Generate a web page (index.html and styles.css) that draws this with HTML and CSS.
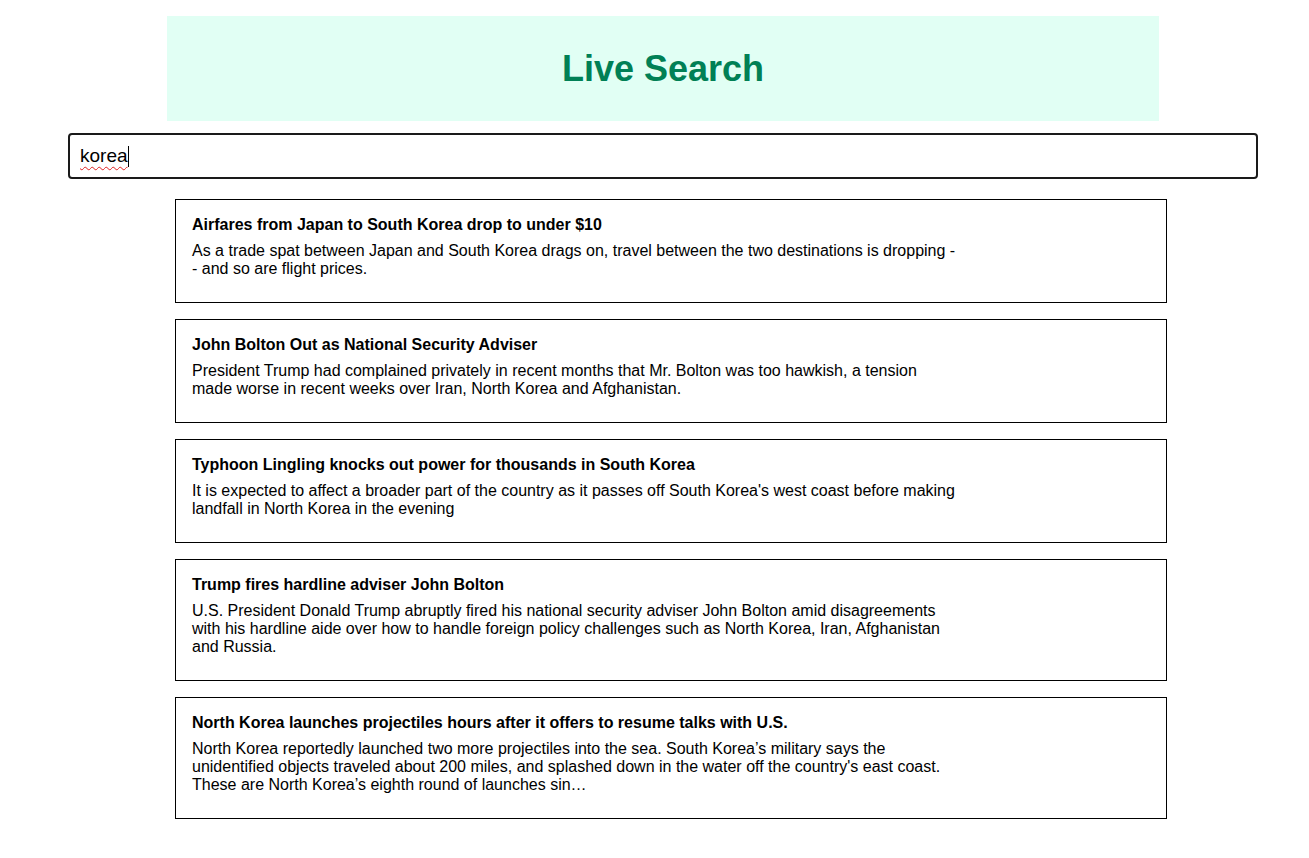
FILE: index.html
```html
<!DOCTYPE html>
<html>
<head>
<meta charset="utf-8">
<link rel="stylesheet" href="styles.css">
</head>
<body>
<header class="banner"><h1 class="title">Live Search</h1></header>
<div class="search"><span class="query">korea</span><span class="caret"></span></div>
<main class="results">
  <article class="card">
    <h3 class="card-title">Airfares from Japan to South Korea drop to under $10</h3>
    <p class="card-desc">As a trade spat between Japan and South Korea drags on, travel between the two destinations is dropping -- and so are flight prices.</p>
  </article>
  <article class="card">
    <h3 class="card-title">John Bolton Out as National Security Adviser</h3>
    <p class="card-desc">President Trump had complained privately in recent months that Mr. Bolton was too hawkish, a tension made worse in recent weeks over Iran, North Korea and Afghanistan.</p>
  </article>
  <article class="card">
    <h3 class="card-title">Typhoon Lingling knocks out power for thousands in South Korea</h3>
    <p class="card-desc">It is expected to affect a broader part of the country as it passes off South Korea's west coast before making landfall in North Korea in the evening</p>
  </article>
  <article class="card">
    <h3 class="card-title">Trump fires hardline adviser John Bolton</h3>
    <p class="card-desc">U.S. President Donald Trump abruptly fired his national security adviser John Bolton amid disagreements with his hardline aide over how to handle foreign policy challenges such as North Korea, Iran, Afghanistan and Russia.</p>
  </article>
  <article class="card">
    <h3 class="card-title">North Korea launches projectiles hours after it offers to resume talks with U.S.</h3>
    <p class="card-desc">North Korea reportedly launched two more projectiles into the sea. South Korea’s military says the unidentified objects traveled about 200 miles, and splashed down in the water off the country's east coast. These are North Korea’s eighth round of launches sin…</p>
  </article>
</main>
</body>
</html>
```
FILE: styles.css
```css
html, body {
  margin: 0;
  padding: 0;
  background: #fff;
}
body {
  font-family: "Liberation Sans", Arial, sans-serif;
  color: #000;
  padding-top: 16px;
}
.banner {
  margin-left: 167px;
  width: 992px;
  height: 105px;
  background: #e1fff4;
  display: flex;
  align-items: center;
  justify-content: center;
}
.title {
  margin: 0;
  font-size: 36px;
  font-weight: bold;
  color: #008055;
  line-height: 42px;
}
.search {
  margin-top: 12px;
  margin-left: 68px;
  width: 1190px;
  height: 46px;
  box-sizing: border-box;
  border: 2px solid #1a1a1a;
  border-radius: 4px;
  padding: 0 10px;
  display: flex;
  align-items: center;
  font-size: 19px;
}
.query {
  text-decoration: underline wavy #e02020;
  text-decoration-thickness: 1px;
  text-underline-offset: 4px;
  text-decoration-skip-ink: none;
}
.caret {
  width: 1px;
  height: 21px;
  background: #000;
  margin-left: 0;
}
.results {
  margin-top: 20px;
  margin-left: 175px;
  width: 992px;
  display: flex;
  flex-direction: column;
  gap: 16px;
}
.card {
  border: 1px solid #000;
  padding: 16px 16px 24px;
}
.card-title {
  margin: 0 0 8px;
  font-size: 16px;
  font-weight: bold;
  line-height: 18px;
}
.card-desc {
  margin: 0;
  font-size: 16px;
  line-height: 18px;
  width: 766px;
}
```
